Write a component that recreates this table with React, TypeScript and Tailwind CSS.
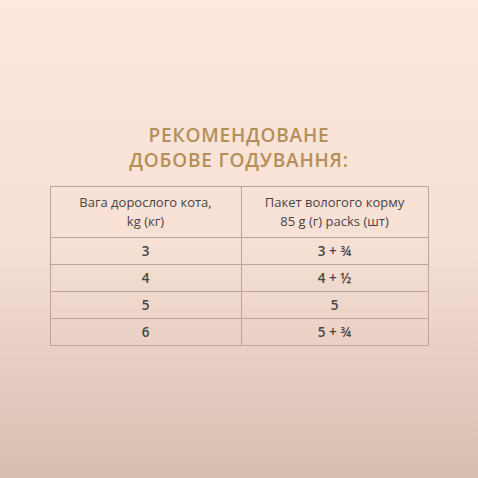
const ROWS = [
  ["3", "3 + ¾"],
  ["4", "4 + ½"],
  ["5", "5"],
  ["6", "5 + ¾"],
];

export default function App() {
  return (
    <div
      className="w-[478px] h-[478px] bg-gradient-to-b from-[#fee9de] via-[#f7e0d4] to-[#d6beb1] flex flex-col items-center pt-[123px]"
      style={{ fontFamily: '"Open Sans", "Liberation Sans", sans-serif' }}
    >
      <h1 className="text-[19px] leading-[25px] font-semibold text-[#b48f57] text-center tracking-[0.8px]">
        РЕКОМЕНДОВАНЕ
        <br />
        ДОБОВЕ ГОДУВАННЯ:
      </h1>

      <table className="mt-[13px] w-[379px] border-collapse border border-[#bca498] text-[#474444] text-[13px]">
        <thead>
          <tr className="h-[51px]">
            <th className="border border-[#bca498] font-normal leading-[19px] w-[191px]">
              Вага дорослого кота,
              <br />
              kg (кг)
            </th>
            <th className="border border-[#bca498] font-normal leading-[19px]">
              Пакет вологого корму
              <br />
              85 g (г) packs (шт)
            </th>
          </tr>
        </thead>
        <tbody>
          {ROWS.map(([w, p]) => (
            <tr key={w} className="h-[27px]">
              <td className="border border-[#bca498] text-center font-semibold text-[13.5px]">{w}</td>
              <td className="border border-[#bca498] text-center font-semibold text-[13.5px]">{p}</td>
            </tr>
          ))}
        </tbody>
      </table>
    </div>
  );
}
